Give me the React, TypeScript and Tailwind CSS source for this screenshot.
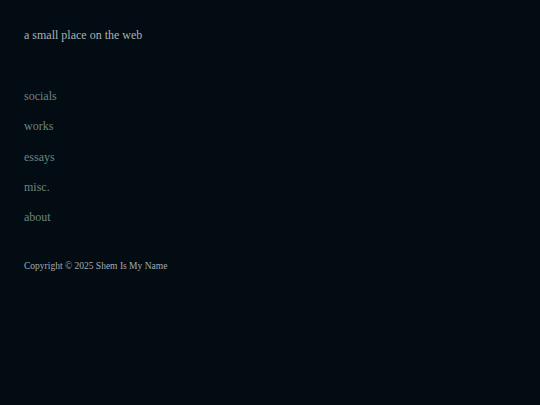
import React from "react";

export default function App() {
  const links = ["socials", "works", "essays", "misc.", "about"];
  return (
    <div
      className="min-h-screen w-full bg-[#030c13] px-6 pt-[28px]"
      style={{ fontFamily: '"Liberation Serif", "Times New Roman", serif' }}
    >
      <div className="text-[12px] leading-[14px] text-[#a7b2b5]">a small place on the web</div>
      <nav className="mt-[39px] flex flex-col">
        {links.map((l) => (
          <a key={l} href="#" className="block text-[12px] leading-[30.25px] text-[#6a8681]">
            {l}
          </a>
        ))}
      </nav>
      <div className="mt-[28px] text-[9.5px] leading-[12px] text-[#a3adb1]">
        Copyright © 2025 Shem Is My Name
      </div>
    </div>
  );
}
